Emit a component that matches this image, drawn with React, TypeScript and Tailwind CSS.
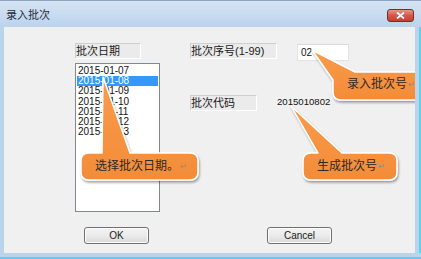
const font = "font-['Liberation_Sans','Noto_Sans_CJK_SC',sans-serif]";

const dates = [
  "2015-01-07",
  "2015-01-08",
  "2015-01-09",
  "2015-01-10",
  "2015-01-11",
  "2015-01-12",
  "2015-01-13",
];

function StaticLabel({ text, w }: { text: string; w: string }) {
  return (
    <div
      className={`${w} h-[16px] bg-[#ebebeb] border-t border-l border-[#cfcfcf] border-b border-r border-b-white border-r-white text-[11px] leading-[14px] text-[#1a1a1a] pl-[0px] whitespace-nowrap`}
    >
      {text}
    </div>
  );
}

function Button({ label, className }: { label: string; className?: string }) {
  return (
    <div
      className={`h-[17px] w-[65px] rounded-[3px] border border-[#707070] bg-gradient-to-b from-[#f3f3f3] via-[#ebebeb] to-[#d8d8d8] flex items-center justify-center text-[10px] text-[#1a1a1a] shadow-[inset_0_0_0_1px_#fcfcfc] ${className ?? ""}`}
    >
      {label}
    </div>
  );
}

function Callouts() {
  return (
    <svg
      className="absolute inset-0 pointer-events-none"
      width="411"
      height="226"
      viewBox="0 0 411 226"
    >
      <defs>
        <filter id="sh" x="-20%" y="-20%" width="140%" height="160%">
          <feDropShadow dx="1" dy="2" stdDeviation="1.2" floodColor="#000" floodOpacity="0.35" />
        </filter>
        <linearGradient id="og" x1="0" y1="0" x2="0" y2="1">
          <stop offset="0" stopColor="#f99b4c" />
          <stop offset="1" stopColor="#f38c38" />
        </linearGradient>
      </defs>
      {/* 录入批次号 */}
      <path
        d="M308,23 L351,45 L425,45 L425,73 L337,73 Q329,73 329,65 L329,53 Z"
        fill="url(#og)"
        stroke="#fff"
        strokeWidth="1.5"
        strokeLinejoin="round"
        filter="url(#sh)"
      />
      {/* 选择批次日期 */}
      <path
        d="M85,126 L98,126 L99,50 L126,126 L186,126 Q194,126 194,134 L194,145 Q194,153 186,153 L85,153 Q77,153 77,145 L77,134 Q77,126 85,126 Z"
        fill="url(#og)"
        stroke="#fff"
        strokeWidth="1.5"
        strokeLinejoin="round"
        filter="url(#sh)"
      />
      {/* 生成批次号 */}
      <path
        d="M307,126 L314,126 L287,79 L338,126 L385,126 Q393,126 393,134 L393,145 Q393,153 385,153 L307,153 Q299,153 299,145 L299,134 Q299,126 307,126 Z"
        fill="url(#og)"
        stroke="#fff"
        strokeWidth="1.5"
        strokeLinejoin="round"
        filter="url(#sh)"
      />
    </svg>
  );
}

function BubbleText({ text, className }: { text: string; className: string }) {
  return (
    <div className={`absolute flex items-center text-[12px] leading-[14px] text-[#2a2a2a] whitespace-nowrap ${className}`}>
      {text}
      <span className="text-[8px] text-[#8a8a8a] ml-[1px] mt-[2px]">↵</span>
    </div>
  );
}

export default function App() {
  return (
    <div className={`w-[421px] h-[259px] bg-[#bcd3ec] border-t border-[#8ea5bf] flex flex-col overflow-hidden ${font}`}>
      {/* Title bar */}
      <div className="h-[26px] flex items-center justify-between pl-[6px] pr-[7px] bg-gradient-to-b from-[#d5e4f4] to-[#bcd3ec]">
        <span className="text-[11px] text-[#1e2a38] mt-[2px]">录入批次</span>
        <div className="w-[27px] h-[13px] mt-[2px] rounded-[3px] border border-[#7e2b22] bg-gradient-to-b from-[#e4968c] via-[#cf5a4c] to-[#c2402f] flex items-center justify-center">
          <svg width="9" height="7" viewBox="0 0 9 7">
            <path d="M1,0.5 L8,6.5 M8,0.5 L1,6.5" stroke="#fff" strokeWidth="1.8" />
          </svg>
        </div>
      </div>

      {/* Client area */}
      <div className="flex">
        <div className="w-[4px]" />
        <div className="relative w-[411px] h-[226px] bg-[#f0f0f0] overflow-hidden">
          <div className="flex pl-[71px] pt-[16px]">
            {/* Left column */}
            <div className="w-[85px] flex flex-col">
              <StaticLabel text="批次日期" w="w-[66px]" />
              <div className="mt-[4px] h-[149px] bg-white border border-[#828790] pt-[2px]">
                {dates.map((d, i) => (
                  <div
                    key={d}
                    className={`mx-[1px] h-[10.2px] pl-[1px] text-[10px] leading-[10px] ${
                      i === 1 ? "bg-[#3399ff] text-white" : "text-[#111]"
                    }`}
                  >
                    {d}
                  </div>
                ))}
              </div>
            </div>

            {/* Middle column */}
            <div className="ml-[30px] flex flex-col">
              <div className="flex items-start">
                <StaticLabel text="批次序号(1-99)" w="w-[87px]" />
                <div className="ml-[20px] mt-[1px] w-[52px] h-[17px] bg-white border border-[#e3e3e3] border-t-[#dadada] text-[10px] leading-[15px] pl-[3px] text-[#111]">
                  02
                </div>
              </div>
              <div className="flex items-center mt-[34px]">
                <StaticLabel text="批次代码" w="w-[67px]" />
                <span className="ml-[20px] text-[9.6px] text-[#111] leading-[12px] -mt-[2px]">2015010802</span>
              </div>
            </div>
          </div>

          {/* Buttons */}
          <div className="flex pl-[80px] mt-[15px]">
            <Button label="OK" />
            <Button label="Cancel" className="ml-[118px]" />
          </div>

          <Callouts />
          <BubbleText text="录入批次号" className="left-[343px] top-[49px]" />
          <BubbleText text="选择批次日期。" className="left-[91px] top-[131px]" />
          <BubbleText text="生成批次号" className="left-[313px] top-[131px]" />
        </div>
        <div className="w-[4px]" />
        <div className="w-[2px] bg-[#5ccff2]" />
      </div>
      <div className="h-[4px]" />
      <div className="h-[2px] bg-[#5ccff2]" />
    </div>
  );
}
